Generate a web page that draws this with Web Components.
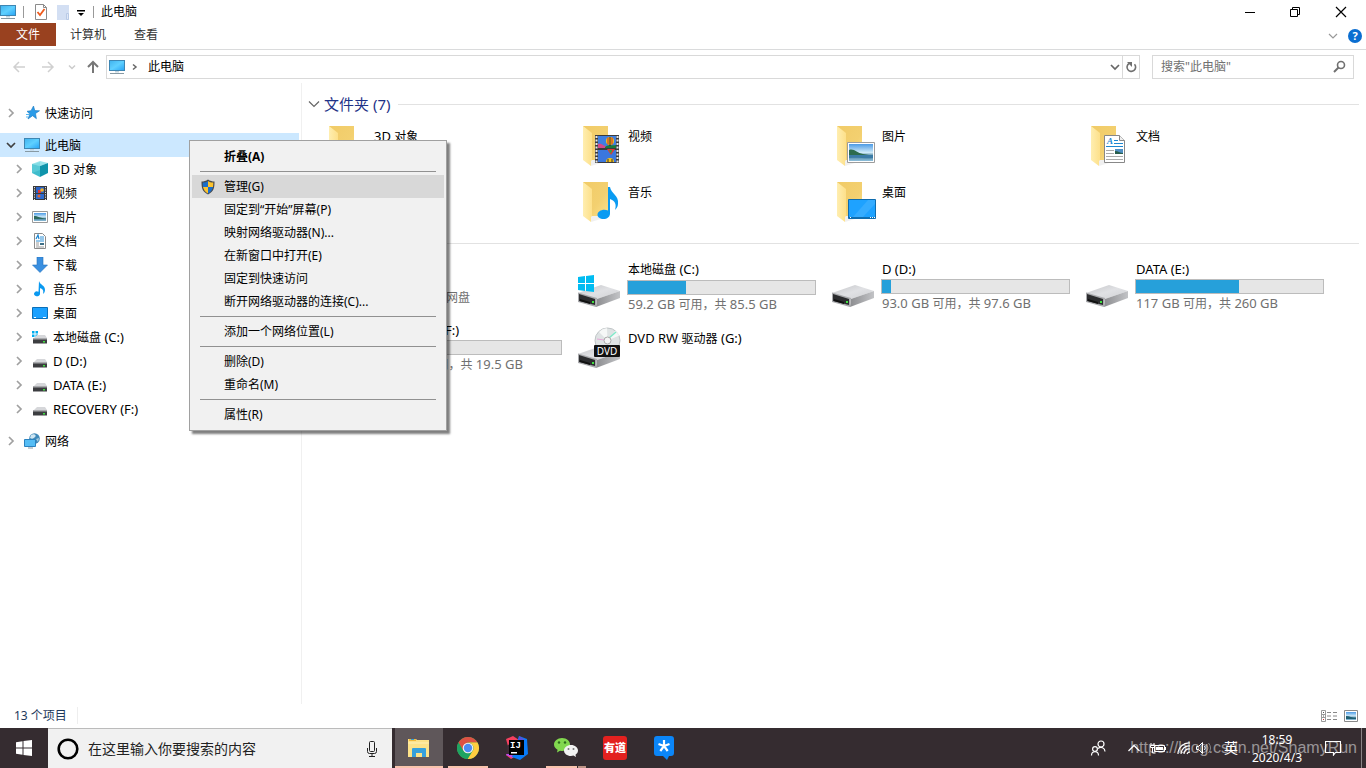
<!DOCTYPE html>
<html lang="zh-CN">
<head>
<meta charset="utf-8">
<title>此电脑</title>
<style>
  html, body { height: 100%; margin: 0; }
  body { font: 12px/16px "Noto Sans", "Noto Sans CJK SC", sans-serif; color: #000; background: #fff; overflow: hidden; }
</style>
</head>
<body>
<desktop-shell></desktop-shell>

<script>
const FOLDER = `<defs><linearGradient id="fb" x1="0" y1="0" x2="1" y2="1"><stop offset="0" stop-color="#f1cb67"/><stop offset=".6" stop-color="#f3d070"/><stop offset="1" stop-color="#fbe08a"/></linearGradient><linearGradient id="ff" x1="0" y1="0" x2="1" y2="0"><stop offset="0" stop-color="#ffeeb0"/><stop offset="1" stop-color="#fde08a"/></linearGradient></defs>
<path d="M8 4H33V38H12z" fill="url(#fb)"/><path d="M16 38h20l-20 6z" fill="#000" opacity=".06"/><path d="M8 4l9 7v27l-1 1v5l-8-6z" fill="url(#ff)"/>`;
const DRIVE = `<defs><linearGradient id="dt" x1="0" y1="0" x2="1" y2="1"><stop offset="0" stop-color="#c4c5c8"/><stop offset=".5" stop-color="#e0e1e4"/><stop offset="1" stop-color="#cfd0d3"/></linearGradient><linearGradient id="ds" x1="0" y1="0" x2="1" y2="0"><stop offset="0" stop-color="#8c8d90"/><stop offset="1" stop-color="#c2c3c6"/></linearGradient></defs>
<path d="M3 30l23-8 19 6-23 8z" fill="url(#dt)"/><path d="M22 36l23-8v7l-24 9z" fill="url(#ds)"/><path d="M3 29.500l19 5.500-1 9-18-5z" fill="#a9aaad"/><path d="M4 31l16 5v6L4 38z" fill="#2c2d2f"/><path d="M5 36l10 3v2L5 38z" fill="#111"/><path d="M17 38h2v2h-2z" fill="#3fe03f"/>`;
const MINI_DRIVE = `<path d="M2 9l3-3h8l2 3z" fill="#d6d7da"/><path d="M1 9h14v5.500H1z" fill="#3c3d40"/><path d="M1 9h14v1.500H1z" fill="#a9aaad"/><path d="M11 12h2v1.500h-2z" fill="#3fe03f"/>`;
const PC = `<defs><linearGradient id="pc" x1="0" y1="0" x2="1" y2="1"><stop offset="0" stop-color="#3fb2ee"/><stop offset=".5" stop-color="#5fd0ff"/><stop offset="1" stop-color="#26a3f5"/></linearGradient></defs><rect x=".5" y="1.500" width="15" height="10" fill="url(#pc)" stroke="#3d86b3"/><path d="M6 12h4v1.500H6z" fill="#c2d3dc"/><path d="M1 14h14v1H1z" fill="#8799a3"/>`;
const SCENE = `<defs><linearGradient id="sk" x1="0" y1="0" x2="0" y2="1"><stop offset="0" stop-color="#4c9be6"/><stop offset=".5" stop-color="#cfeaf8"/><stop offset=".7" stop-color="#477f9a"/><stop offset="1" stop-color="#8fc0dc"/></linearGradient></defs>`;
const ICONS = {
  pc: [16, PC],
  'doc-check': [16, `<path d="M2.500.5h8l3 3v12h-11z" fill="#fff" stroke="#8b8b8b"/><path d="M10.500.5v3h3" fill="none" stroke="#8b8b8b"/><path d="M4.500 8l2.500 3 4.500-6" fill="none" stroke="#ef5a1c" stroke-width="1.800"/>`],
  'folder-pale': [16, `<path d="M2 1h12v15H2z" fill="#d3dff3"/><path d="M11.500 9.500h2v6h-2z" fill="#dfe8f7" stroke="#b9cae6"/>`],
  'qat-menu': [16, `<path d="M4 6h8v1.500H4z"/><path d="M5 9h6l-3 3z"/>`],
  minimize: [16, `<path d="M4 8.500h10" stroke="#000"/>`],
  restore: [16, `<path d="M3.500 5.500h7v7h-7zM5.500 5.500v-2h7v7h-2" fill="none" stroke="#000"/>`],
  close: [16, `<path d="M3 3l10 10M13 3L3 13" stroke="#000" stroke-width="1.200"/>`],
  'chev-r': [12, `<path d="M4 2l4 4-4 4" fill="none" stroke="currentColor" stroke-width="1.700"/>`],
  'chev-s': [12, `<path d="M4 3.500l3 2.500-3 2.500" fill="none" stroke="currentColor" stroke-width="1.500"/>`],
  'chev-ds': [12, `<path d="M3 4.500l3 3 3-3" fill="none" stroke="currentColor" stroke-width="1.500"/>`],
  'chev-d': [12, `<path d="M2 4l4 4 4-4" fill="none" stroke="currentColor" stroke-width="1.700"/>`],
  'chev-thin': [12, `<path d="M1 3.500l5 5 5-5" fill="none" stroke="currentColor" stroke-width="1.200"/>`],
  'chev-ribbon': [12, `<path d="M2 4l4 4 4-4" fill="none" stroke="currentColor" stroke-width="1.200"/>`],
  back: [16, `<path d="M14 8H3M8 3L3 8l5 5" fill="none" stroke="#d0d0d0" stroke-width="1.500"/>`],
  forward: [16, `<path d="M2 8h11M8 3l5 5-5 5" fill="none" stroke="#d0d0d0" stroke-width="1.500"/>`],
  up: [16, `<path d="M8 14V3M3 8l5-5 5 5" fill="none" stroke="#777" stroke-width="2"/>`],
  refresh: [16, `<path d="M11.500 5.200A4.300 4.300 0 1 1 6 4.500" fill="none" stroke="#707070" stroke-width="1.600"/><path d="M4 3h5v5z" fill="#707070"/>`],
  search: [16, `<circle cx="10" cy="6" r="3.500" fill="none" stroke="#707070" stroke-width="1.600"/><path d="M7.500 8.500L3 13" stroke="#707070" stroke-width="2"/>`],
  help: [16, `<circle cx="8" cy="8" r="7" fill="#0a6ed1"/><text x="8" y="12" text-anchor="middle" font-family="Noto Sans" font-weight="700" font-size="11" fill="#fff">?</text>`],
  star: [16, `<path d="M9.500 1l1.300 4.600 4.700.2-4 2.700.9 5.200-3.800-3L4 14l1.800-5L3 6.300l4-.6z" fill="#2a9be8" stroke="#1777bf" stroke-width=".6"/><path d="M2 9.500h3M2 12h2" stroke="#52b6f2"/>`],
  cube: [16, `<path d="M0 3l8-3 8 2-8 3z" fill="#9be4ec"/><path d="M0 3l8 2v11l-8-4z" fill="#3fbccc"/><path d="M16 2L8 5v11l8-4z" fill="#0f94ab"/><path d="M4 2.500l4-1.500v8l-8 3V3z" fill="#6bd3de" opacity=".55"/>`],
  film: [16, `<path d="M1 1h14v14H1z" fill="#39393b"/><path d="M4 2h8v6H4z" fill="#2a62c4"/><path d="M4 9h8v5H4z" fill="#2d6bd0"/><path d="M6 5h3v3H6z" fill="#d7383a"/><circle cx="10" cy="5" r="1.800" fill="#f1b32a"/><circle cx="7" cy="11" r="1.500" fill="#e5602b"/><path d="M2.500 2v13M13.500 2v13" stroke="#ddd" stroke-dasharray="1.200 1.200"/>`],
  photo: [16, SCENE + `<path d="M.5 2.500h15v11H.5z" fill="#fff" stroke="#9a9a9a"/><path d="M2 4h12v8H2z" fill="url(#sk)"/><path d="M2 7c4 0 6 2 12 3H2z" fill="#2d6a5e"/>`],
  doc: [16, `<path d="M2.500.5h8l3 3v12h-11z" fill="#fff" stroke="#8b8b8b"/><path d="M8 4h4M8 6h4M4 8h8" stroke="#2c8fd6"/><path d="M4 10h3M4 12h3M4 14h8" stroke="#999"/><path d="M4 6l2-4 1 4" fill="none" stroke="#1c86d1" stroke-width="1.200"/><path d="M8 10h4v2H8z" fill="#3e6f86"/>`],
  download: [16, `<path d="M5 0h6v8h4.500L8 15.500.5 8H5z" fill="#3a8fe0" stroke="#2673be" stroke-width=".6"/>`],
  note: [16, `<path d="M7 0c1 4 6 4 6 9 0 2-1 3-2 4 1-4-.5-5-3-6v6a3 2.500 0 1 1-1.500-2.300z" fill="#0a99f0"/>`],
  desktop: [16, `<path d="M.5 2.500h15v11H.5z" fill="#1ba1ff" stroke="#0b6fb8"/><path d="M2 12.500h2M11 12.500h3" stroke="#fff"/>`],
  'drive-win': [16, `<path d="M0 2h2.500v2.500H0zM3.500 2H6v2.500H3.500zM0 5.500h2.500V8H0zM3.500 5.500H6V8H3.500z" fill="#00adef"/>${MINI_DRIVE}`],
  drive: [16, MINI_DRIVE],
  network: [16, `<circle cx="10.500" cy="5.500" r="5.300" fill="#3f88b8"/><path d="M7 2c3-2 6 0 4 2S8 6 6 5z" fill="#cfe6f2"/><path d="M12 6l3-1-1 4z" fill="#a8cfe2"/><path d="M.5 6.500h11v7H.5z" fill="#55bdf5" stroke="#2b82bf"/><path d="M4 15h5" stroke="#8799a3"/>`],
  shield: [16, `<path d="M8 .5c2 1.500 4.500 2 6.500 2 0 6-.5 10-6.500 13C2 12.500 1.500 8.500 1.500 2.500 3.500 2.500 6 2 8 .5z" fill="#494b4e"/><path d="M8 2v6H3c-.3-1.500-.3-3-.3-4.500C5 3.500 6.500 3 8 2z" fill="#1a6ecb"/><path d="M8 2v6h5c.3-1.500.3-3 .3-4.500C11 3.500 9.500 3 8 2z" fill="#fcc32d"/><path d="M3 8h5v6.500C5 13 3.600 10.500 3 8z" fill="#fcc32d"/><path d="M13 8H8v6.500c3-1.500 4.400-4 5-6.500z" fill="#1a6ecb"/>`],
  'folder-48': [48, FOLDER],
  'video-48': [48, FOLDER + `<path d="M20 13h24v28H20z" fill="#3b3b3d"/><path d="M23 14h18v12H23z" fill="#3f7fe0"/><path d="M23 28h18v12H23z" fill="#3a77dd"/><path d="M23 22c3-2 5 2 8 2v2h-8z" fill="#d4488a"/><path d="M30 25c4-3 7-1 11-2v3H30z" fill="#1b7a3a"/><ellipse cx="35" cy="19" rx="4" ry="4" fill="#f5c118"/><path d="M33 15.500v7M37 15.500v7" stroke="#c4252b" stroke-width="1"/><path d="M35 15v9" stroke="#222"/><path d="M32 27h8l-4 6z" fill="#e23a35"/><path d="M34 28h3l-1 4z" fill="#2ca44c"/><path d="M31 40a4 4 0 0 1 8 0z" fill="#f5c118"/><path d="M33 37v3M37 37v3" stroke="#333"/><path d="M21.500 14v27M42.500 14v27" stroke="#e6e6e6" stroke-width="2" stroke-dasharray="2 1.500"/>`],
  'photo-48': [48, FOLDER + SCENE + `<path d="M18.500 20.500h27v20h-27z" fill="#fff" stroke="#9c9c9c"/><path d="M20 22h24v17H20z" fill="url(#sk)"/><path d="M20 28c5-2 8 3 14 4l6 1H20z" fill="#2d6b4c"/><path d="M20 33h24v3c-8 1-14-1-24 0z" fill="#3b7ba6"/>`],
  'doc-48': [48, FOLDER + `<path d="M21.500 13.500h15l5 5v22h-20z" fill="#fff" stroke="#888"/><path d="M36.500 13.500v5h5" fill="#eee" stroke="#888"/><text x="24" y="22" font-family="Liberation Serif" font-style="italic" font-weight="700" font-size="9" fill="#1c86d1">A</text><path d="M31 18.500h4M31 21.500h9M23 24.500h17" stroke="#1c86d1"/><path d="M23 28.500h8M23 31.500h8M23 34.500h17M23 37.500h17" stroke="#aaa"/><path d="M32 27h8v5h-8z" fill="#4f8fc4"/><path d="M32 29c3 0 5 2 8 2v1h-8z" fill="#285d4b"/>`],
  'note-48': [48, FOLDER + `<path d="M33 9h2c1 7 9 8 8 17-.2 3-1.500 4.500-3 6 2-6-.5-9.500-5-11v14.500c0 3.500-3 5.500-6.500 5.500-3.300 0-6-1.500-6-4.200 0-3.800 5.500-6.300 10.500-4.300z" fill="#0a9bf2"/>`],
  'desktop-48': [48, FOLDER + `<path d="M19.500 21.500h27v19h-27z" fill="#1ea2ff" stroke="#0e6cae"/><path d="M24 39L39 22h7v4L34 39z" fill="#4bb6ff" opacity=".5"/><path d="M20 39h26v1H20z" fill="#0f6fb2"/><path d="M21 39.500h1M41 39.500h1M43 39.500h1M45 39.500h1" stroke="#fff"/>`],
  'down-48': [48, FOLDER + `<path d="M28 15h8v13h6L32 40 22 28h6z" fill="#3a8fe0"/>`],
  'drive-48': [48, DRIVE],
  'drive-win-48': [48, DRIVE + `<path d="M3 14l7-1v7H3zM11 13l8-1v8h-8zM3 21h7v7l-7-1zM11 21h8v8l-8-1z" fill="#00bcf2"/>`],
  'dvd-48': [48, DRIVE + `<circle cx="32.500" cy="16.500" r="12.500" fill="#dfe3e4" stroke="#bfc4c6"/><path d="M32.500 16.500L24 8a12 12 0 0 1 8-4zM32.500 16.500l12-5a12 12 0 0 0-4-5z" fill="#fff" opacity=".7"/><path d="M34 14l7-6" stroke="#7fe8c8" stroke-width="1.500"/><path d="M22 15l7 1" stroke="#e7a6d8"/><circle cx="32.500" cy="16.500" r="3.500" fill="#f5f5f5" stroke="#aaa"/><rect x="19" y="21" width="26" height="12" rx="1" fill="#111"/><text x="32" y="31" text-anchor="middle" font-family="Noto Sans" font-size="10" fill="#fff">DVD</text>`],
  details: [16, `<path d="M.5 2.500h4v11h-4zM.5 6.500h4M.5 9.500h4" fill="none" stroke="#999"/><path d="M2 4.500h1M2 8h1" stroke="#555"/><path d="M2 11.500h1" stroke="#c33"/><path d="M6 4.500h4M12 4.500h4M6 8h4M12 8h4M6 11.500h4M12 11.500h4" stroke="#888"/>`],
  tiles: [16, SCENE + `<path d="M1.500 2.500h13v11h-13z" fill="#fff" stroke="#8a8a8a"/><path d="M3 4h10v8H3z" fill="url(#sk)"/><path d="M3 8c4 0 6 2 10 2v1H3z" fill="#1e5f73"/>`],
  windows: [16, `<path d="M0 2.200L6.500 1.300v6.200H0zM7.500 1.100L16 0v7.500H7.500zM0 8.500h6.500v6.200L0 13.800zM7.500 8.500H16V16l-8.500-1.100z" fill="#fff"/>`],
  cortana: [24, `<circle cx="12" cy="12" r="9.300" fill="none" stroke="#000" stroke-width="2.600"/>`],
  mic: [16, `<rect x="5.500" y=".5" width="5" height="10" rx="1" fill="none" stroke="#222"/><path d="M3.500 7v3.500q0 2 2 2h5q2 0 2-2V7M8 12.500v3M5 15.500h6" fill="none" stroke="#222"/>`],
  explorer: [24, `<path d="M1 3h8l1 1h12v17H1z" fill="#fde289"/><path d="M2 3h7v2H2z" fill="#f3b93a"/><path d="M4 3.500h3" stroke="#2f9fe0"/><path d="M1 7h21" stroke="#fff0b8"/><path d="M5 13q0-1 1-1h12q1 0 1 1v8h-4v-4H9v4H5z" fill="#36a0dc"/>`],
  chrome: [24, `<circle cx="12" cy="12" r="11" fill="#4caf50"/><path d="M2.500 6.500A11 11 0 0 1 21.500 6.500H12a5.500 5.500 0 0 0-5 3.500z" fill="#dd5144"/><path d="M2.500 6.500L7.200 14.800 12 12V6.500z" fill="#dd5144"/><path d="M21.500 6.500A11 11 0 0 1 11.500 23l5.300-8.200A5.500 5.500 0 0 0 12 6.500z" fill="#ffcd40"/><path d="M2.500 6.500A11 11 0 0 0 11.500 23l4-6.500-3.500 1A5.500 5.500 0 0 1 7.200 14.800z" fill="#1ea362"/><circle cx="12" cy="12" r="5.300" fill="#f1f1f1"/><circle cx="12" cy="12" r="4.200" fill="#4c8bf5"/>`],
  idea: [24, `<path d="M1 3l7-3 6 4-3 16-5 3-5-4 3-5z" fill="#f4405f"/><path d="M1 19l4-6 3 9z" fill="#b74af0"/><path d="M2 10l5-4v12H1z" fill="#3b2d36"/><path d="M14 0l8 3 1 15-8 6-8-3z" fill="#087cfa"/><path d="M14 0l5 3-1 6h-5z" fill="#5a50d8"/><path d="M4 4h15v15H4z" fill="#000"/><text x="5" y="12" font-family="Liberation Mono" font-weight="700" font-size="9" fill="#fff">IJ</text><path d="M6 16h6v1.500H6z" fill="#fff"/>`],
  wechat: [24, `<path d="M8 2c5 0 8 3 8 6.500S13 15 8 15l-2-.3L3 16.500l.6-2.800C1.500 12.500 0 11 0 8.500 0 5 3.500 2 8 2z" fill="#82d84f"/><circle cx="5" cy="6.500" r="1.200" fill="#2c6b1c"/><circle cx="11" cy="6.500" r="1.200" fill="#2c6b1c"/><path d="M17 9c4 0 7 2.500 7 5.500 0 1.800-1 3.200-2.500 4.200l.5 2.300-2.600-1.400L17 20c-4 0-7-2.500-7-5.500S13 9 17 9z" fill="#f2f2f2"/><circle cx="14.500" cy="13" r="1" fill="#777"/><circle cx="19.500" cy="13" r="1" fill="#777"/>`],
  youdao: [24, `<rect width="24" height="24" rx="3" fill="#e3211f"/><text x="12" y="16" text-anchor="middle" font-family="Noto Sans CJK SC" font-weight="900" font-size="11" fill="#fff">有道</text>`],
  dida: [24, `<path d="M5 0h14q3 0 3 3v14q0 3-3 3h-2l-2 4-4-4H5q-3 0-3-3V3q0-3 3-3z" fill="#0b86f8"/><path d="M12 10V4M12 10l5.500-2M12 10l3.700 5M12 10l-3.700 5M12 10L6.500 8" stroke="#fff" stroke-width="2.200" fill="none"/>`],
  people: [16, `<circle cx="11" cy="4" r="3" fill="none" stroke="#fff" stroke-width="1.200"/><circle cx="5" cy="9" r="2.400" fill="none" stroke="#fff" stroke-width="1.200"/><path d="M1.500 15.500c0-5 7-5 7 0M8 8.500c3-2.500 7-.5 7 3" fill="none" stroke="#fff" stroke-width="1.200"/>`],
  'tray-up': [16, `<path d="M2.500 11L8 5.500l5.500 5.500" fill="none" stroke="#fff" stroke-width="1.300"/>`],
  battery: [16, `<path d="M4.500 5.500h10v6h-10z" fill="none" stroke="#fff"/><path d="M6 7h7v3H6zM15 7h1v3h-1z" fill="#fff"/><path d="M1 3v2M4 3v2M.5 5.500h4v2h-4zM2.500 8v5h3" fill="none" stroke="#fff"/>`],
  wifi: [16, `<path d="M2 14A11 11 0 0 1 14 3M5 14a8 8 0 0 1 9-8M8 14a5 5 0 0 1 6-5M11 14a3 3 0 0 1 3-2" fill="none" stroke="#fff" stroke-width="1.200"/>`],
  volume: [16, `<path d="M1.500 6.500h2l4-4v11l-4-4h-2z" fill="none" stroke="#fff"/><path d="M9.500 6q1.500 2 0 4" fill="none" stroke="#fff"/><path d="M11.500 4.500q3 3.500 0 7M13.500 3q4 5 0 10" fill="none" stroke="#888"/>`],
  action: [16, `<path d="M.5 1.500h15v11h-5l-2 2.500v-2.500h-8z" fill="none" stroke="#fff" stroke-width="1.200"/>`]
};

/* Registers an element whose open shadow root is cloned from the given markup. */
function define(name, css, markup, init) {
  const tpl = document.createElement('template');
  tpl.innerHTML = `<style>*{box-sizing:border-box}button,input{font:inherit;color:inherit;border:0;background:none;padding:0;margin:0;outline:0}a{color:inherit;text-decoration:none}${css}</style>${markup}`;
  customElements.define(name, class extends HTMLElement {
    connectedCallback() {
      if (this.shadowRoot) return;
      const root = this.attachShadow({ mode: 'open' });
      root.append(tpl.content.cloneNode(true));
      if (init) init.call(this, root);
    }
  });
}

define('ui-icon', `:host{display:block;flex:none}svg{display:block}`, `<div id="box"></div>`, function (root) {
  const [size, art] = ICONS[this.getAttribute('name')];
  root.getElementById('box').innerHTML = `<svg width="${size}" height="${size}" viewBox="0 0 ${size} ${size}" aria-hidden="true">${art}</svg>`;
});

define('title-bar', `
  :host{display:flex;align-items:center;height:23px;padding-right:2px}
  .quick{display:flex;align-items:center;flex:1}
  .line{width:1px;height:12px;background:#999}
  .doc{margin:0 6px 0 9px}.first{margin-left:7px}.more{margin:0 4px 0 2px}
  h1{font:inherit;margin:0 0 0 7px}
  .win{width:46px;height:22px;display:grid;place-items:center}`,
  `<div class="quick"><ui-icon name="pc"></ui-icon><span class="line first"></span>
   <button class="doc" aria-label="属性"><ui-icon name="doc-check"></ui-icon></button>
   <button aria-label="新建文件夹"><ui-icon name="folder-pale"></ui-icon></button>
   <button class="more" aria-label="自定义快速访问工具栏"><ui-icon name="qat-menu"></ui-icon></button>
   <span class="line"></span><h1><slot></slot></h1></div>
   <button class="win" aria-label="最小化"><ui-icon name="minimize"></ui-icon></button>
   <button class="win" aria-label="还原"><ui-icon name="restore"></ui-icon></button>
   <button class="win" aria-label="关闭"><ui-icon name="close"></ui-icon></button>`);

define('ribbon-tabs', `
  :host{display:flex;height:27px;box-sizing:border-box;border-bottom:1px solid #dadbdc;padding-right:3px;color:#333}
  button{height:23px;padding:0 14px}
  .file{background:#99411f;color:#fff;padding:0 16px}
  .gap{flex:1}
  .icon{padding:0;display:grid;place-items:center;height:26px;width:16px;margin-left:6px;color:#999}`,
  `<button class="file">文件</button><button>计算机</button><button>查看</button><span class="gap"></span>
   <button class="icon" aria-label="展开功能区"><ui-icon name="chev-ribbon"></ui-icon></button>
   <button class="icon" aria-label="帮助"><ui-icon name="help"></ui-icon></button>`);

define('address-row', `
  :host{display:flex;align-items:center;height:33px;padding:0 12px 0 11px}
  .nav{flex:none}
  .fwd{margin-left:13px}.hist{margin:0 7px 0 10px;color:#ccc}.up{margin-right:5px}
  .bar,.find{display:flex;align-items:center;height:24px;border:1px solid #d9d9d9}
  .bar{flex:1}
  .path{display:flex;align-items:center;flex:1;padding-left:2px}
  .path ui-icon+ui-icon{margin:0 7px 0 4px;color:#666}
  .drop{color:#666;margin-right:1px}
  .reload{height:22px;width:17px;border-left:1px solid #d9d9d9}
  .find{width:202px;margin-left:12px;padding:0 6px 0 8px}
  input{flex:1;min-width:0}input::placeholder{color:#707070;opacity:1}`,
  `<button class="nav" aria-label="后退"><ui-icon name="back"></ui-icon></button>
   <button class="nav fwd" aria-label="前进"><ui-icon name="forward"></ui-icon></button>
   <button class="nav hist" aria-label="最近浏览的位置"><ui-icon name="chev-ds"></ui-icon></button>
   <button class="nav up" aria-label="上移"><ui-icon name="up"></ui-icon></button>
   <div class="bar"><div class="path"><ui-icon name="pc"></ui-icon><ui-icon name="chev-s"></ui-icon><a href="#">此电脑</a></div>
   <button class="drop" aria-label="以前的位置"><ui-icon name="chev-d"></ui-icon></button>
   <button class="reload" aria-label="刷新"><ui-icon name="refresh"></ui-icon></button></div>
   <div class="find"><input type="search" aria-label="搜索此电脑" placeholder='搜索"此电脑"'><ui-icon name="search"></ui-icon></div>`);

define('tree-item', `
  :host{display:block}
  a{display:flex;align-items:center;height:24px;padding-left:5px}
  :host([level="2"]) a{padding-left:13px}
  :host([selected]) a{background:#cce8ff}
  .chev{color:#a0a0a0;margin-right:7px}
  :host([selected]) .chev{color:#404040}
  .pic{margin-right:5px}`,
  `<a href="#"><span class="chev"></span><span class="pic"></span><span><slot></slot></span></a>`,
  function (root) {
    root.querySelector('.chev').innerHTML = `<ui-icon name="${this.hasAttribute('selected') ? 'chev-d' : 'chev-r'}"></ui-icon>`;
    root.querySelector('.pic').innerHTML = `<ui-icon name="${this.getAttribute('icon')}"></ui-icon>`;
  });

define('nav-tree', `
  :host{display:block;border-right:1px solid #f0f0f0;padding:18px 2px 0 0;font-size:13px}
  .group{margin-bottom:8px}
  small{font-size:12px}`,
  `<nav aria-label="导航窗格"><div class="group"><tree-item icon="star"><small>快速访问</small></tree-item></div>
   <div class="group"><tree-item icon="pc" selected><small>此电脑</small></tree-item>
   <tree-item level="2" icon="cube">3D <small>对象</small></tree-item><tree-item level="2" icon="film"><small>视频</small></tree-item>
   <tree-item level="2" icon="photo"><small>图片</small></tree-item><tree-item level="2" icon="doc"><small>文档</small></tree-item>
   <tree-item level="2" icon="download"><small>下载</small></tree-item><tree-item level="2" icon="note"><small>音乐</small></tree-item>
   <tree-item level="2" icon="desktop"><small>桌面</small></tree-item><tree-item level="2" icon="drive-win"><small>本地磁盘</small> (C:)</tree-item>
   <tree-item level="2" icon="drive">D (D:)</tree-item><tree-item level="2" icon="drive">DATA (E:)</tree-item>
   <tree-item level="2" icon="drive">RECOVERY (F:)</tree-item></div>
   <tree-item icon="network"><small>网络</small></tree-item></nav>`);

define('item-group', `
  :host{display:block}
  h2{display:flex;align-items:center;gap:4px;margin:0;font-weight:400;font-size:15px;line-height:20px;color:#1e3287}
  h2 ui-icon{color:#666}
  h2::after{content:"";flex:1;height:1px;background:#e2e2e2;margin-left:4px}
  .grid{display:grid;grid-template-columns:repeat(auto-fill,254px);padding:8px 0 0 13px}`,
  `<h2><ui-icon name="chev-thin"></ui-icon><slot name="title"></slot></h2><div class="grid"><slot></slot></div>`);

define('folder-tile', `:host{display:block}a{display:flex;gap:5px;height:56px}span{padding-top:6px}`,
  `<a href="#"><div id="pic"></div><span><slot></slot></span></a>`,
  function (root) { root.getElementById('pic').innerHTML = `<ui-icon name="${this.getAttribute('icon')}-48"></ui-icon>`; });

define('drive-tile', `
  :host{display:block}
  a{display:flex;height:61px;gap:4px}
  #pic{width:48px;padding-top:2px}
  .text{display:flex;flex-direction:column}
  .name,.info{padding-left:1px}
  .info{color:#707070}
  progress{appearance:none;-webkit-appearance:none;display:block;width:189px;height:15px;border:1px solid #bcbcbc;background:#e6e6e6;margin:2px 0 1px}
  progress::-webkit-progress-bar{background:#e6e6e6}
  progress::-webkit-progress-value{background:#26a0da}
  :host(:not([used])) progress{display:none}
  :host(:not([used])) .name{padding-top:8px}
  :host([note]) .info{padding-top:3px}`,
  `<a href="#"><div id="pic"></div><div class="text"><span class="name"><slot></slot></span><progress max="100" aria-label="已用空间"></progress><span class="info"><slot name="info"></slot></span></div></a>`,
  function (root) {
    if (this.hasAttribute('icon')) root.getElementById('pic').innerHTML = `<ui-icon name="${this.getAttribute('icon')}-48"></ui-icon>`;
    root.querySelector('progress').value = this.getAttribute('used') || 0;
  });

define('file-view', `:host{display:block;padding:11px 7px 0 6px;min-width:0;font-size:13px}
  item-group+item-group{margin-top:-1px}
  small{font-size:12px}`,
  `<item-group><span slot="title">文件夹 (7)</span>
   <folder-tile icon="folder">3D <small>对象</small></folder-tile><folder-tile icon="video"><small>视频</small></folder-tile>
   <folder-tile icon="photo"><small>图片</small></folder-tile><folder-tile icon="doc"><small>文档</small></folder-tile>
   <folder-tile icon="down"><small>下载</small></folder-tile><folder-tile icon="note"><small>音乐</small></folder-tile>
   <folder-tile icon="desktop"><small>桌面</small></folder-tile></item-group>
   <item-group><span slot="title">设备和驱动器 (6)</span>
   <drive-tile note><small>百度网盘</small><small slot="info">双击运行百度网盘</small></drive-tile>
   <drive-tile icon="drive-win" used="31"><small>本地磁盘</small> (C:)<span slot="info">59.2 GB <small>可用，共</small> 85.5 GB</span></drive-tile>
   <drive-tile icon="drive" used="5">D (D:)<span slot="info">93.0 GB <small>可用，共</small> 97.6 GB</span></drive-tile>
   <drive-tile icon="drive" used="55">DATA (E:)<span slot="info">117 GB <small>可用，共</small> 260 GB</span></drive-tile>
   <drive-tile icon="drive" used="22">RECOVERY (F:)<span slot="info">15.2 GB <small>可用，共</small> 19.5 GB</span></drive-tile>
   <drive-tile icon="dvd">DVD RW <small>驱动器</small> (G:)</drive-tile></item-group>`);

define('menu-item', `
  :host{display:block}
  button{display:flex;align-items:center;width:100%;height:23px;padding-left:8px;text-align:left}
  .pic{width:16px;margin-right:8px}
  :host([default]) button{font-weight:700}
  :host([active]) button{background:#d8d8d8}`,
  `<button role="menuitem"><span class="pic"></span><slot></slot></button>`,
  function (root) { if (this.hasAttribute('icon')) root.querySelector('.pic').innerHTML = `<ui-icon name="${this.getAttribute('icon')}"></ui-icon>`; });

define('context-menu', `
  :host{display:block;width:258px;box-sizing:border-box;background:#f1f1f1;border:1px solid #a0a0a0;padding:4px 2px;box-shadow:3px 3px 2px rgba(0,0,0,.5)}
  hr{border:0;height:1px;background:#919191;margin:3px 8px}`,
  `<div role="menu"><menu-item default>折叠(A)</menu-item><hr>
   <menu-item active icon="shield">管理(G)</menu-item><menu-item>固定到“开始”屏幕(P)</menu-item>
   <menu-item>映射网络驱动器(N)...</menu-item><menu-item>在新窗口中打开(E)</menu-item>
   <menu-item>固定到快速访问</menu-item><menu-item>断开网络驱动器的连接(C)...</menu-item><hr>
   <menu-item>添加一个网络位置(L)</menu-item><hr>
   <menu-item>删除(D)</menu-item><menu-item>重命名(M)</menu-item><hr>
   <menu-item>属性(R)</menu-item></div>`);

define('status-bar', `
  :host{display:flex;align-items:center;height:24px;padding:0 7px 0 14px;color:#1e395b}
  .count{flex:1}.count span{border-right:1px solid #eee;padding-right:10px}
  button{margin-left:6px}`,
  `<div class="count"><span><slot></slot></span></div>
   <button aria-label="详细信息"><ui-icon name="details"></ui-icon></button>
   <button aria-label="大图标"><ui-icon name="tiles"></ui-icon></button>`);

define('task-button', `
  :host{display:block}
  button{position:relative;display:grid;place-items:center;width:48px;height:40px}
  :host([active]) button{background:#5f575a}
  .run{position:absolute;left:4px;right:4px;bottom:0;height:2px;background:#f9c3ad;display:none}
  :host([active]) .run{display:block;left:0;right:0}
  :host([running]) .run{display:block}
  :host([stacked]) .run{background:linear-gradient(90deg,#f9c3ad 31px,#352c30 31px,#352c30 32px,#bd9486 32px)}`,
  `<button><span id="pic"></span><span class="run"></span></button>`,
  function (root) {
    root.getElementById('pic').innerHTML = `<ui-icon name="${this.getAttribute('icon')}"></ui-icon>`;
    root.querySelector('button').setAttribute('aria-label', this.getAttribute('label'));
  });

define('task-bar', `
  :host{display:flex;position:relative;height:40px;background:#352c30;color:#fff}
  .find{display:flex;align-items:center;width:344px;background:#f1f1f1;border-top:1px solid #bbb;padding:0 12px 0 8px;color:#222}
  .find input{flex:1;min-width:0;font-size:14px;line-height:20px;margin-left:8px}
  .find input::placeholder{color:#222;opacity:1}
  .apps{display:flex;gap:1px;margin-left:3px;flex:1}
  .tray{display:flex;align-items:center}
  .people{margin-right:20px}.tray .up{margin-right:8px}.tray .bat{margin-right:10px}.tray .net{margin-right:3px}
  .lang{font-size:14px;width:16px;margin:0 8px 0 12px}
  .clock{width:60px;line-height:18px;text-align:center;padding-top:2px;margin-right:18px}
  .edge{width:5px;height:40px;border-left:1px solid #8a8486;margin-left:20px}
  .mark{position:absolute;right:9px;top:10px;font:16px/20px "Liberation Sans",sans-serif;color:rgba(255,255,255,.5);pointer-events:none}`,
  `<task-button icon="windows" label="开始"></task-button>
   <div class="find"><ui-icon name="cortana"></ui-icon><input type="text" aria-label="搜索" placeholder="在这里输入你要搜索的内容"><button aria-label="语音"><ui-icon name="mic"></ui-icon></button></div>
   <div class="apps"><task-button icon="explorer" label="文件资源管理器" active></task-button>
   <task-button icon="chrome" label="Chrome" running></task-button><task-button icon="idea" label="IntelliJ IDEA"></task-button>
   <task-button icon="wechat" label="微信" running stacked></task-button><task-button icon="youdao" label="有道词典"></task-button>
   <task-button icon="dida" label="便签"></task-button></div>
   <div class="tray"><button class="people" aria-label="人脉"><ui-icon name="people"></ui-icon></button>
   <button class="up" aria-label="显示隐藏的图标"><ui-icon name="tray-up"></ui-icon></button>
   <button class="bat" aria-label="电池"><ui-icon name="battery"></ui-icon></button>
   <button class="net" aria-label="网络"><ui-icon name="wifi"></ui-icon></button>
   <button aria-label="音量"><ui-icon name="volume"></ui-icon></button>
   <button class="lang">英</button>
   <button class="clock">18:59<br>2020/4/3</button>
   <button aria-label="操作中心"><ui-icon name="action"></ui-icon></button><span class="edge"></span></div>
   <span class="mark">https://blog.csdn.net/ShamyRun</span>`);

define('desktop-shell', `
  :host{display:flex;flex-direction:column;height:100vh;position:relative}
  main{flex:1;min-height:0;display:grid;grid-template-columns:302px 1fr}
  context-menu{position:absolute;left:189px;top:140px}`,
  `<title-bar>此电脑</title-bar><ribbon-tabs></ribbon-tabs><address-row></address-row>
   <main><nav-tree></nav-tree><file-view></file-view></main>
   <status-bar>13 个项目</status-bar><task-bar></task-bar><context-menu></context-menu>`);
</script>
</body>
</html>
